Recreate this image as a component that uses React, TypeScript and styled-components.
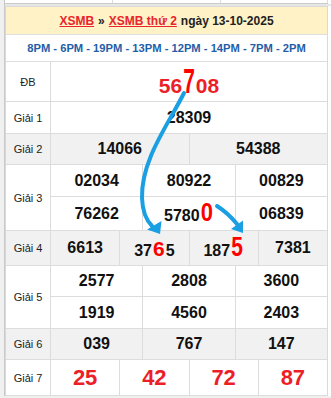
import React from "react";
import styled, { createGlobalStyle } from "styled-components";

const Global = createGlobalStyle`
  html, body { margin: 0; padding: 0; }
  body {
    background: #f0f0f0;
    font-family: "Liberation Sans", Arial, sans-serif;
  }
`;

const Page = styled.div`
  padding-left: 4px;
  width: 331px;
  box-sizing: border-box;
`;

const Frame = styled.div`
  border-left: 1px solid #c9c9c9;
  background: #fff;
`;

const PrevRow = styled.div`
  display: grid;
  grid-template-columns: 108px 108px 1fr;
  height: 3px;
  margin-right: 3px;
  border-bottom: 1px solid #cbcbcb;
`;

const PrevCell = styled.div`
  border-right: 1px solid #dcdcdc;
`;

const Gap = styled.div`
  height: 2px;
  background: #e6e6e6;
`;

const Table = styled.div`
  position: relative;
  margin-right: 3px;
  border: 1px solid #d9d9d9;
  border-bottom: none;
`;

const Header = styled.div`
  height: 27px;
  display: flex;
  align-items: center;
  justify-content: center;
  gap: 4px;
  background: #fff2c6;
  border-bottom: 1px solid #dedede;
  font-size: 12px;
  font-weight: bold;
  color: #222;
  white-space: nowrap;
`;

const Link = styled.a`
  color: #e8242c;
  text-decoration: underline;
`;

const TimeRow = styled.div`
  height: 26px;
  display: flex;
  align-items: center;
  justify-content: center;
  border-bottom: 1px solid #dedede;
  font-size: 11.2px;
  font-weight: bold;
  color: #1f5ea8;
  white-space: nowrap;
`;

const Prize = styled.div<{ $gray?: boolean }>`
  display: grid;
  grid-template-columns: 45px 1fr;
  background: ${(p) => (p.$gray ? "#f1f1f1" : "#fff")};
  border-bottom: 1px solid #dcdcdc;
`;

const Label = styled.div`
  display: flex;
  align-items: center;
  justify-content: center;
  border-right: 1px solid #dcdcdc;
  font-size: 11px;
  color: #222;
`;

const Cells = styled.div<{ $cols: number; $rows: string }>`
  display: grid;
  grid-template-columns: repeat(${(p) => p.$cols}, 1fr);
  grid-template-rows: ${(p) => p.$rows};
  gap: 1px;
  background: #dcdcdc;
`;

const Cell = styled.div<{ $gray?: boolean; $shift?: number }>`
  display: flex;
  align-items: center;
  justify-content: center;
  padding-top: ${(p) => p.$shift ?? 0}px;
  background: ${(p) => (p.$gray ? "#f1f1f1" : "#fff")};
  font-size: 16px;
  font-weight: bold;
  color: #111;
  white-space: nowrap;
`;

const Num = styled.span<{ $size: number; $red?: boolean }>`
  font-size: ${(p) => p.$size}px;
  font-weight: bold;
  color: ${(p) => (p.$red ? "#ec1e27" : "#111")};
  line-height: 1;
`;

const Hi = styled.span<{ $size: number; $stretch: number }>`
  display: inline-block;
  font-size: ${(p) => p.$size}px;
  color: #ff0000;
  transform: scaleY(${(p) => p.$stretch});
  transform-origin: 50% 85%;
  line-height: 1;
  margin: 0 1px;
`;

const Arrows = styled.svg`
  position: absolute;
  left: 0;
  top: 0;
  width: 100%;
  height: 100%;
  pointer-events: none;
  overflow: visible;
`;

type Row = {
  label: string;
  gray?: boolean;
  cols: number;
  rows: string;
  nums: React.ReactNode[];
  size?: number;
  red?: boolean;
  shift?: number;
};

const rows: Row[] = [
  {
    label: "ĐB",
    cols: 1,
    rows: "39px",
    size: 21,
    red: true,
    shift: 8,
    nums: [
      <>
        56<Hi $size={21} $stretch={1.7}>7</Hi>08
      </>,
    ],
  },
  { label: "Giải 1", cols: 1, rows: "31px", nums: ["28309"] },
  { label: "Giải 2", gray: true, cols: 2, rows: "30px", nums: ["14066", "54388"] },
  {
    label: "Giải 3",
    cols: 3,
    rows: "31px 33px",
    nums: [
      "02034",
      "80922",
      "00829",
      "76262",
      <>
        5780<Hi $size={22} $stretch={1.15}>0</Hi>
      </>,
      "06839",
    ],
  },
  {
    label: "Giải 4",
    gray: true,
    cols: 4,
    rows: "34px",
    nums: [
      "6613",
      <>
        37<Hi $size={21} $stretch={1}>6</Hi>5
      </>,
      <>
        187<Hi $size={21} $stretch={1.33}>5</Hi>
      </>,
      "7381",
    ],
  },
  {
    label: "Giải 5",
    cols: 3,
    rows: "30px 31px",
    nums: ["2577", "2808", "3600", "1919", "4560", "2403"],
  },
  { label: "Giải 6", gray: true, cols: 3, rows: "30px", nums: ["039", "767", "147"] },
  { label: "Giải 7", cols: 4, rows: "35px", size: 22, red: true, nums: ["25", "42", "72", "87"] },
];

export default function App() {
  return (
    <>
      <Global />
      <Page>
        <Frame>
          <PrevRow>
            <PrevCell />
            <PrevCell />
            <PrevCell />
          </PrevRow>
          <Gap />
          <Table>
            <Header>
              <Link>XSMB</Link>
              <span>»</span>
              <Link>XSMB thứ 2</Link>
              <span>ngày 13-10-2025</span>
            </Header>
            <TimeRow>8PM - 6PM - 19PM - 13PM - 12PM - 14PM - 7PM - 2PM</TimeRow>
            {rows.map((r) => (
              <Prize key={r.label} $gray={r.gray}>
                <Label>{r.label}</Label>
                <Cells $cols={r.cols} $rows={r.rows}>
                  {r.nums.map((n, i) => (
                    <Cell key={i} $gray={r.gray} $shift={r.shift}>
                      <Num $size={r.size ?? 16} $red={r.red}>
                        {n}
                      </Num>
                    </Cell>
                  ))}
                </Cells>
              </Prize>
            ))}
            <Arrows viewBox="0 0 321 388" preserveAspectRatio="xMinYMin meet">
              <g transform="translate(-6,-7)" fill="#1b9fe3" stroke="#1b9fe3">
                <path
                  d="M184 93 C 168 125, 141 160, 142 198 C 142.5 212, 146 220, 152 226"
                  fill="none"
                  strokeWidth={4}
                  strokeLinecap="round"
                />
                <polygon points="160,234 147,229.5 161.5,221" stroke="none" />
                <path
                  d="M217 206 Q 228 213, 237 224"
                  fill="none"
                  strokeWidth={4}
                  strokeLinecap="round"
                />
                <polygon points="243,233 231,229 243,220.5" stroke="none" />
              </g>
            </Arrows>
          </Table>
        </Frame>
      </Page>
    </>
  );
}
